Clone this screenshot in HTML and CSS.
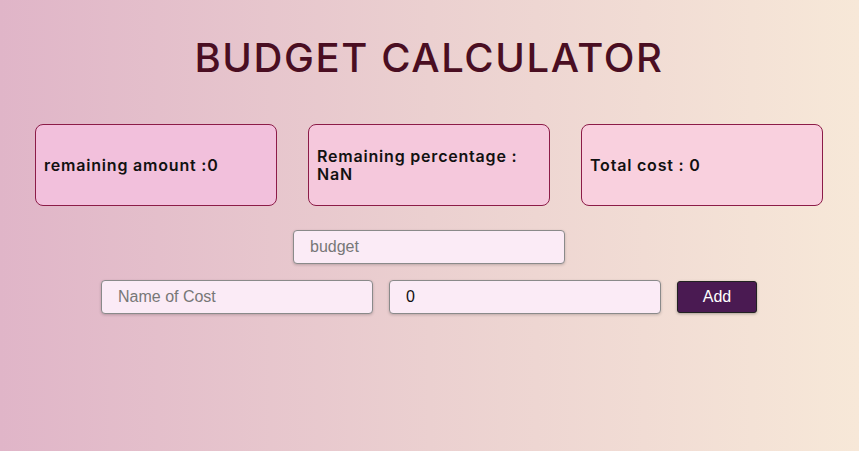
FILE: index.html
```html
<!DOCTYPE html>
<html lang="en">
<head>
<meta charset="utf-8">
<title>Budget Calculator</title>
<link rel="stylesheet" href="styles.css">
</head>
<body>
<main class="app">
  <h1 class="title">BUDGET CALCULATOR</h1>
  <section class="cards">
    <div class="card card-1"><p>remaining amount :0</p></div>
    <div class="card card-2"><p>Remaining percentage : NaN</p></div>
    <div class="card card-3"><p>Total cost : 0</p></div>
  </section>
  <div class="budget-row">
    <input class="field" type="text" placeholder="budget">
  </div>
  <div class="cost-row">
    <input class="field" type="text" placeholder="Name of Cost">
    <input class="field" type="text" value="0">
    <button class="add-btn" type="button">Add</button>
  </div>
</main>
</body>
</html>
```
FILE: styles.css
```css
html, body {
  margin: 0;
  padding: 0;
}
body {
  min-height: 100vh;
  background: linear-gradient(to right, #e0b5c8 0%, #ebd0d0 50%, #f7e8d8 100%);
  font-family: Inter, "DejaVu Sans", sans-serif;
}
.app {
  display: flex;
  flex-direction: column;
  align-items: center;
  padding-top: 34px;
  padding-right: 1px;
}
.title {
  margin: 0;
  font-size: 40px;
  font-weight: 500;
  color: #4a0e22;
  letter-spacing: 1.6px;
  line-height: 48px;
}
.cards {
  display: flex;
  gap: 31px;
  margin-top: 42px;
}
.card {
  width: 242px;
  height: 82px;
  box-sizing: border-box;
  border: 1px solid #8c1c48;
  border-radius: 8px;
  display: flex;
  align-items: center;
  padding: 0 8px;
}
.card p {
  margin: 0;
  font-size: 16px;
  font-weight: 600;
  color: #111;
  line-height: 18px;
  letter-spacing: 0.8px;
}
.card-1 { background: #f2c0dc; }
.card-2 { background: #f5c8dc; }
.card-3 { background: #f9d0de; }
.budget-row {
  margin-top: 24px;
  display: flex;
  justify-content: center;
}
.cost-row {
  margin-top: 16px;
  display: flex;
  gap: 16px;
  align-items: center;
}
.field {
  width: 272px;
  height: 34px;
  box-sizing: border-box;
  border: 1px solid #8a8a8a;
  border-radius: 4px;
  background: #fbebf6;
  padding: 0 16px;
  font-family: "Liberation Sans", Arial, sans-serif;
  font-size: 16px;
  color: #111;
  box-shadow: 0 1px 3px rgba(0, 0, 0, 0.2);
}
.field::placeholder {
  color: #777;
}
.add-btn {
  width: 80px;
  height: 32px;
  box-sizing: border-box;
  border: 1px solid #222;
  border-radius: 3px;
  background: #4a1a52;
  color: #fff;
  font-family: "Liberation Sans", Arial, sans-serif;
  font-size: 16px;
  box-shadow: 0 1px 3px rgba(0, 0, 0, 0.3);
}
```
